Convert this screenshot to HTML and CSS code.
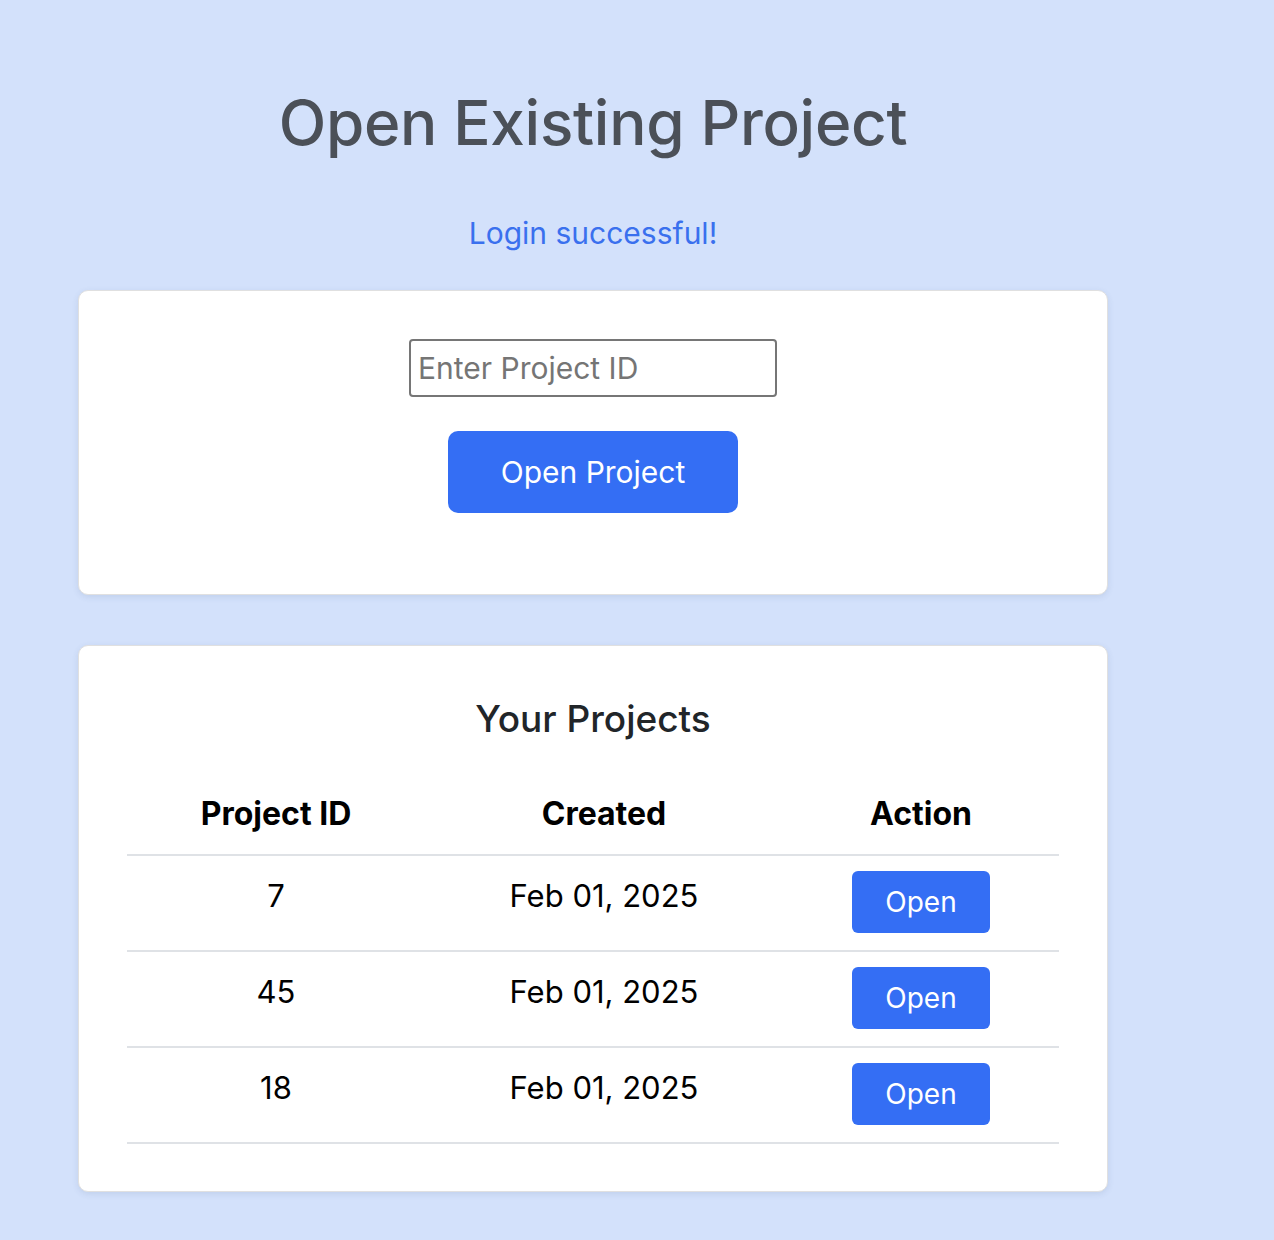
FILE: index.html
```html
<!DOCTYPE html>
<html lang="en">
<head>
<meta charset="utf-8">
<title>Open Existing Project</title>
<link rel="stylesheet" href="styles.css">
</head>
<body>
<main class="page">
  <h1 class="title">Open Existing Project</h1>
  <p class="status">Login successful!</p>

  <section class="card card-open">
    <input class="project-input" type="text" placeholder="Enter Project ID">
    <button class="btn btn-primary" type="button">Open Project</button>
  </section>

  <section class="card card-list">
    <h3 class="list-title">Your Projects</h3>
    <table class="projects">
      <thead>
        <tr>
          <th class="col-id">Project ID</th>
          <th class="col-created">Created</th>
          <th class="col-action">Action</th>
        </tr>
      </thead>
      <tbody>
        <tr>
          <td class="cell-text">7</td>
          <td class="cell-text">Feb 01, 2025</td>
          <td class="cell-action"><button class="btn btn-small" type="button">Open</button></td>
        </tr>
        <tr>
          <td class="cell-text">45</td>
          <td class="cell-text">Feb 01, 2025</td>
          <td class="cell-action"><button class="btn btn-small" type="button">Open</button></td>
        </tr>
        <tr>
          <td class="cell-text">18</td>
          <td class="cell-text">Feb 01, 2025</td>
          <td class="cell-action"><button class="btn btn-small" type="button">Open</button></td>
        </tr>
      </tbody>
    </table>
  </section>
</main>
</body>
</html>
```

FILE: styles.css
```css
* {
  box-sizing: border-box;
}

html, body {
  margin: 0;
  padding: 0;
}

body {
  background: #d3e1fb;
  font-family: Inter, "Noto Sans", "Liberation Sans", sans-serif;
  color: #000;
  min-height: 1240px;
}

.page {
  width: 1030px;
  margin-left: 78px;
  padding-bottom: 48px;
  display: flex;
  flex-direction: column;
  align-items: stretch;
}

.title {
  margin: 85px 0 0;
  font-size: 62px;
  line-height: 76px;
  font-weight: 500;
  color: #4b5058;
  text-align: center;
  letter-spacing: -0.3px;
}

.status {
  margin: 54px 0 0;
  font-size: 30px;
  line-height: 36px;
  color: #3a70ee;
  text-align: center;
}

.card {
  background: #fff;
  border: 1px solid #e0e0e0;
  border-radius: 10px;
  box-shadow: 0 2px 6px rgba(60, 80, 120, 0.12);
}

.card-open {
  margin-top: 39px;
  padding: 48px 48px 81px;
  display: flex;
  flex-direction: column;
  align-items: center;
  gap: 34px;
}

.project-input {
  width: 368px;
  height: 58px;
  border: 2px solid #767676;
  border-radius: 4px;
  padding: 0 7px;
  font-family: inherit;
  font-size: 30px;
  color: #000;
  background: #fff;
  outline: none;
}

.project-input::placeholder {
  color: #757575;
}

.btn {
  border: none;
  background: #346ef4;
  color: #fff;
  font-family: inherit;
  cursor: pointer;
}

.btn-primary {
  width: 290px;
  height: 82px;
  border-radius: 10px;
  font-size: 30px;
  line-height: 1;
}

.card-list {
  margin-top: 50px;
  padding: 51px 48px 47px;
}

.list-title {
  margin: 0;
  font-size: 37px;
  line-height: 44px;
  font-weight: 500;
  color: #212529;
  text-align: center;
}

.projects {
  margin-top: 33px;
  width: 100%;
  border-collapse: collapse;
  table-layout: fixed;
}

.col-id { width: 298px; }
.col-created { width: 358px; }
.col-action { width: 276px; }

.projects th {
  padding: 20px 0;
  font-size: 32px;
  line-height: 40px;
  font-weight: 700;
  text-align: center;
  border-bottom: 2px solid #dfe2e6;
}

.projects td {
  text-align: center;
  vertical-align: top;
  border-bottom: 2px solid #dfe2e6;
  height: 96px;
}

.cell-text {
  padding: 20px 0 0;
  font-size: 31px;
  line-height: 40px;
}

.cell-action {
  padding: 15px 0 0;
}

.btn-small {
  width: 138px;
  height: 62px;
  border-radius: 6px;
  font-size: 28px;
  line-height: 1;
  vertical-align: top;
}
```
